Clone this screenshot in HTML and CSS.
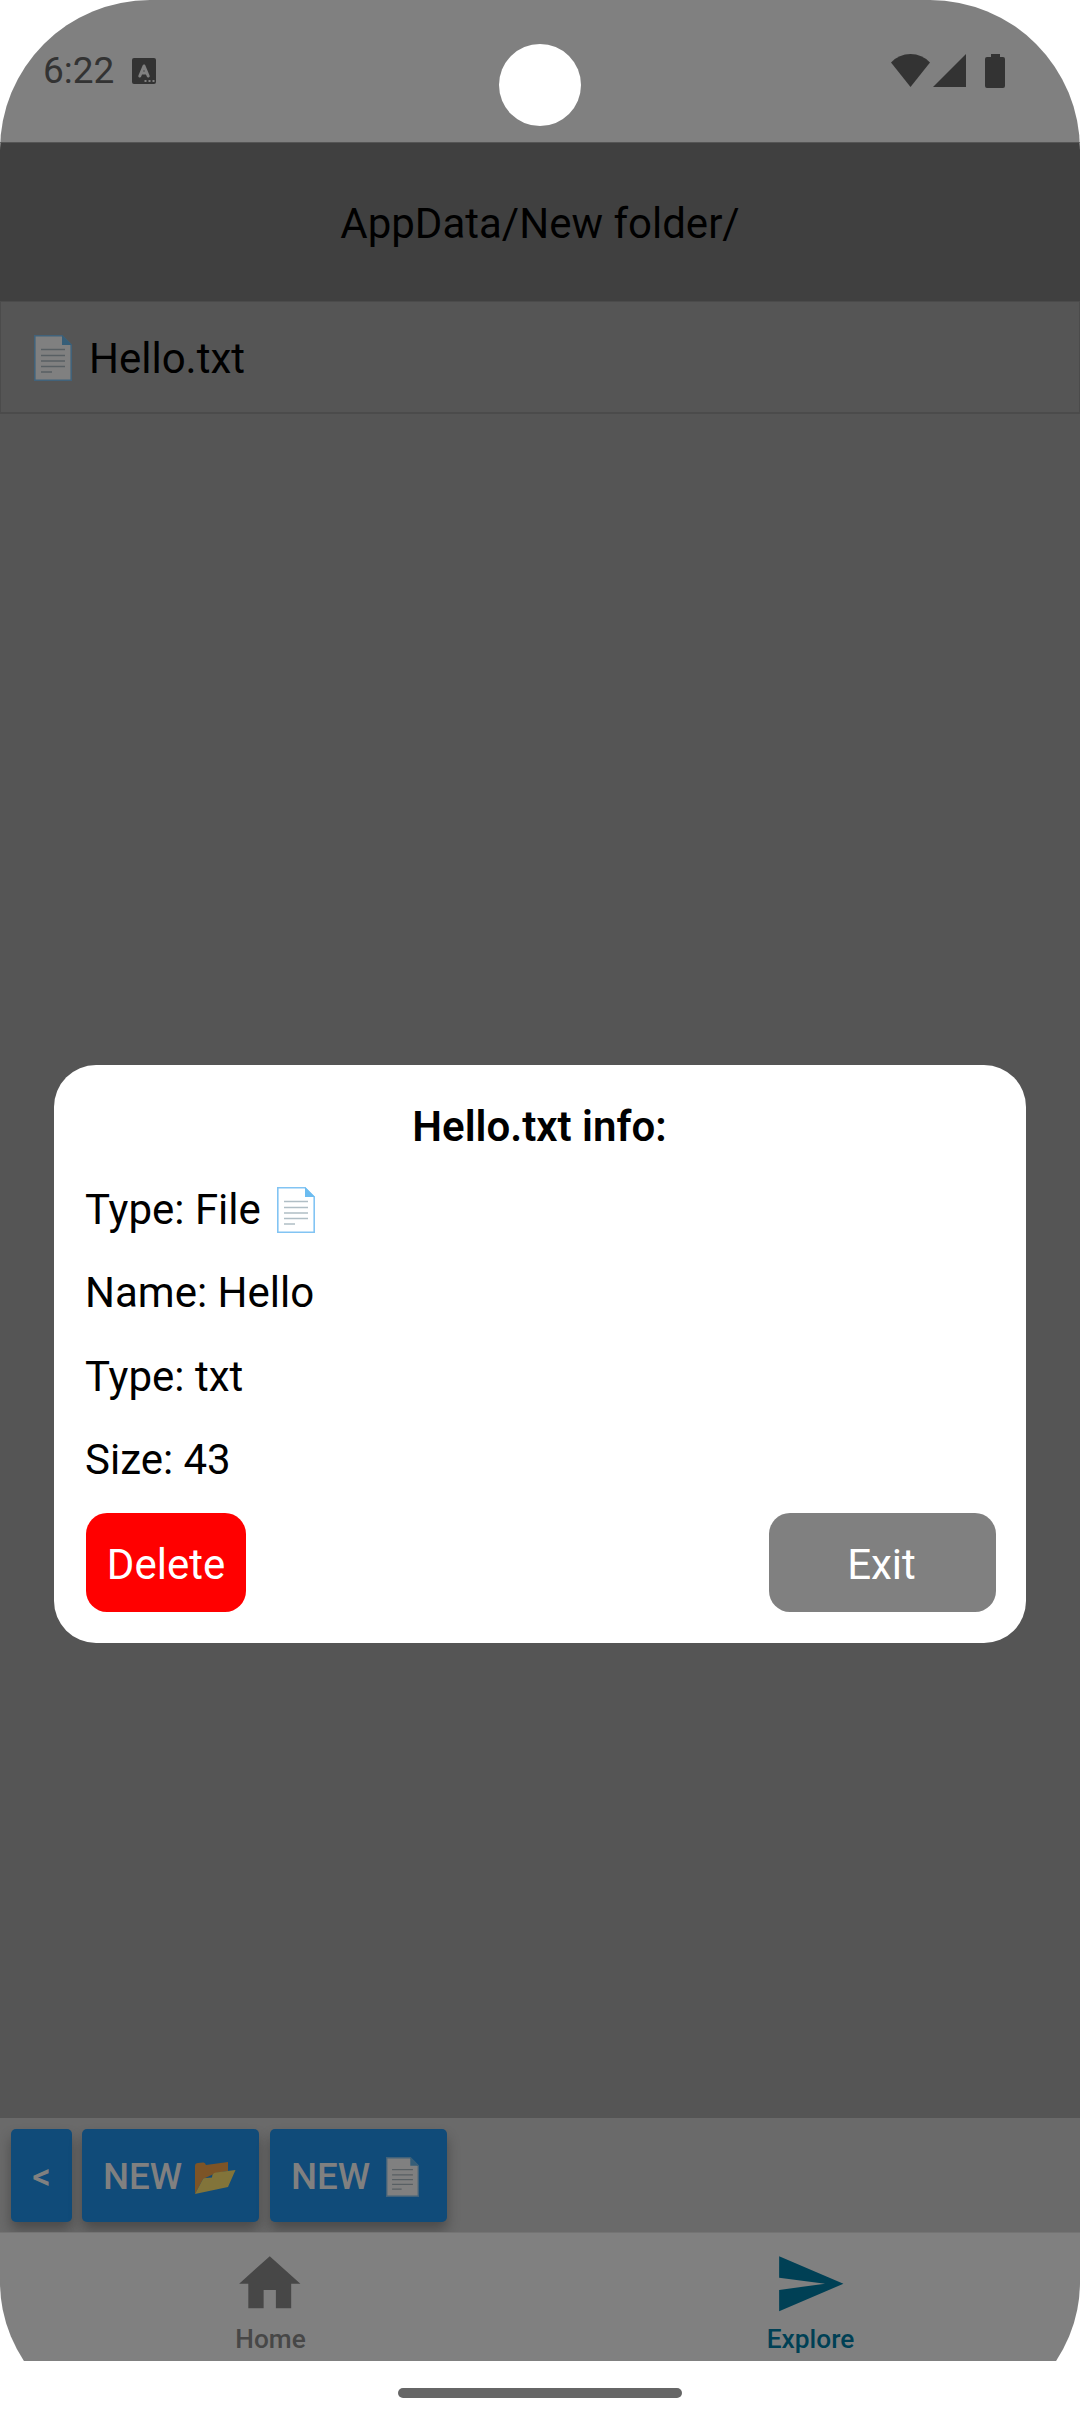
FILE: index.html
```html
<!DOCTYPE html>
<html lang="en">
<head>
<meta charset="utf-8">
<title>Explore</title>
<link rel="stylesheet" href="styles.css">
</head>
<body>
<svg class="defs" aria-hidden="true">
  <symbol id="page" viewBox="0 0 38 46">
    <path d="M.8.8H28L37.2 10V45.2H.8Z" fill="#fff" stroke="#82c4f3" stroke-width="1.6"/>
    <path d="M28 0L38 10H28Z" fill="#6cbcf0"/>
    <path d="M7 14.500H31M7 20.500H31M7 26H31M7 31.500H31M7 37H18" stroke="#b0bec5" stroke-width="1.4"/>
  </symbol>
</svg>
<div class="phone">
  <header class="status">
    <span class="time">6:22</span>
    <svg class="keyboard" viewBox="0 0 24 26"><rect width="24" height="26" rx="2" fill="#333"/><path d="M7.8 18L12 8L16.2 18M9.3 15H14.7" fill="none" stroke="#808080" stroke-width="3" stroke-linejoin="round" stroke-linecap="round"/><path d="M12.500 22h2v2h-2zM16.500 22h2v2h-2zM20.500 22h2v2h-2z" fill="#808080"/></svg>
    <svg class="signals" viewBox="0 0 115 34" fill="#333"><path d="M0 8.500Q8 0 19.500 0T39 8.500L19.500 33Z"/><path d="M75 0V33H42Z"/><path d="M100 0h9v3h3q2 0 2 2v27q0 2-2 2H96q-2 0-2-2V5q0-2 2-2h4Z"/></svg>
    <span class="camera"></span>
  </header>
  <div class="path">AppData/New folder/</div>
  <main class="files">
    <div class="file"><svg class="page-icon dimmed"><use href="#page"/></svg><span>Hello.txt</span></div>
  </main>
  <div class="toolbar">
    <div class="action back">&lt;</div>
    <div class="action">NEW <svg class="folder" viewBox="0 0 41 32"><path d="M0 32V4Q0 1 3 1L8 .6Q10 0 11 3L33 0V9L21 11L8 17Z" fill="#7d5426"/><path d="M0 32L8 17Q9 15.500 17 15.500Q17 11 21 10.500L40.500 8L33 25Z" fill="#82743a"/></svg></div>
    <div class="action">NEW <svg class="page-small dimmed"><use href="#page"/></svg></div>
  </div>
  <nav class="tabs">
    <div class="tab"><svg viewBox="0 0 24 24"><path d="M10 20v-6h4v6h5v-8h3L12 3 2 12h3v8z"/></svg><span>Home</span></div>
    <div class="tab active"><svg viewBox="0 0 24 24"><path d="M2.010 21L23 12 2.010 3 2 10l15 2-15 2z"/></svg><span>Explore</span></div>
  </nav>
  <footer class="gesture"><span></span></footer>
  <section class="modal">
    <h1>Hello.txt info:</h1>
    <p>Type: File <svg class="page-icon"><use href="#page"/></svg></p>
    <p>Name: Hello</p>
    <p>Type: txt</p>
    <p>Size: 43</p>
    <div class="buttons"><div class="button delete">Delete</div><div class="button exit">Exit</div></div>
  </section>
</div>
</body>
</html>
```
FILE: styles.css
```css
* { box-sizing: border-box; }
body { margin: 0; background: #fff; font-family: Roboto, sans-serif; font-size: 42px; color: #000; }
.defs { position: absolute; width: 0; height: 0; }
.phone { position: relative; width: 1080px; height: 2424px; display: flex; flex-direction: column; overflow: hidden; border-radius: 150px 150px 142px 142px; background: #fff; }

.status { position: relative; height: 142px; padding: 0 74px 0 43px; display: flex; align-items: flex-start; background: #808080; }
.time { width: 89px; padding-top: 49px; font-size: 37px; line-height: 44px; color: #333; }
.keyboard { width: 24px; height: 26px; margin-top: 58px; }
.signals { width: 115px; height: 34px; margin: 54px 0 0 auto; }
.camera { position: absolute; left: 499px; top: 44px; width: 82px; height: 82px; border-radius: 50%; background: #fff; }

.path { height: 159px; line-height: 162px; text-align: center; background: #404040; border-top: 1px solid #555; }
.files { flex: 1; background: #555; }
.file { height: 113px; padding: 2px 33px 0; display: flex; align-items: center; gap: 17px; border: 1px solid #4b4b4b; border-bottom-width: 2px; }
.page-icon { width: 38px; height: 46px; }
.dimmed { filter: brightness(.5); }

.toolbar { height: 114px; padding: 11px; display: flex; gap: 11px; overflow: hidden; background: #6a6a6a; }
.action { width: 177px; height: 93px; padding: 2px 0 0 21px; display: flex; align-items: center; gap: 13px; border-radius: 5px; background: #104b79; color: #808080; font-size: 36.75px; font-weight: 500; line-height: 44px; box-shadow: 0 8px 13px rgba(0,0,0,.3); }
.back { width: 61px; margin-right: -1px; padding: 2px 0 0; justify-content: center; }
.folder { width: 41px; height: 32px; margin-top: 2px; }
.page-small { width: 33px; height: 40px; margin-left: 3px; }

.tabs { height: 129px; display: flex; background: #808080; border-top: 1px solid #747474; }
.tab { width: 540px; padding-top: 14px; display: flex; flex-direction: column; align-items: center; color: #474747; font-size: 26.25px; font-weight: 500; line-height: 32px; }
.tab svg { width: 73.5px; height: 73.5px; margin-right: 1px; fill: currentColor; }
.tab span { margin: 2px 0 0 1px; }
.active { color: #004055; }
.gesture { height: 63px; padding-top: 27px; background: #fff; }
.gesture span { display: block; width: 284px; height: 10px; margin: 0 auto; border-radius: 5px; background: #666; }

.modal { position: absolute; left: 54px; top: 1065px; width: 972px; height: 578px; padding: 20px 30px 31px 31px; border-radius: 42px; background: #fff; }
.modal h1 { margin: 0 2px 0 0; font-size: 42px; font-weight: 600; line-height: 84px; text-align: center; }
.modal p { height: 83.3px; margin: 0; display: flex; align-items: center; gap: 6px; line-height: 49px; padding-bottom: 2px; white-space: pre; }
.buttons { height: 99px; margin: 11px 0 0 1px; display: flex; justify-content: space-between; }
.button { height: 99px; border-radius: 21px; color: #fff; line-height: 103px; text-align: center; }
.delete { width: 160px; background: #f00; }
.exit { width: 227px; padding-right: 2px; background: #808080; }
```
